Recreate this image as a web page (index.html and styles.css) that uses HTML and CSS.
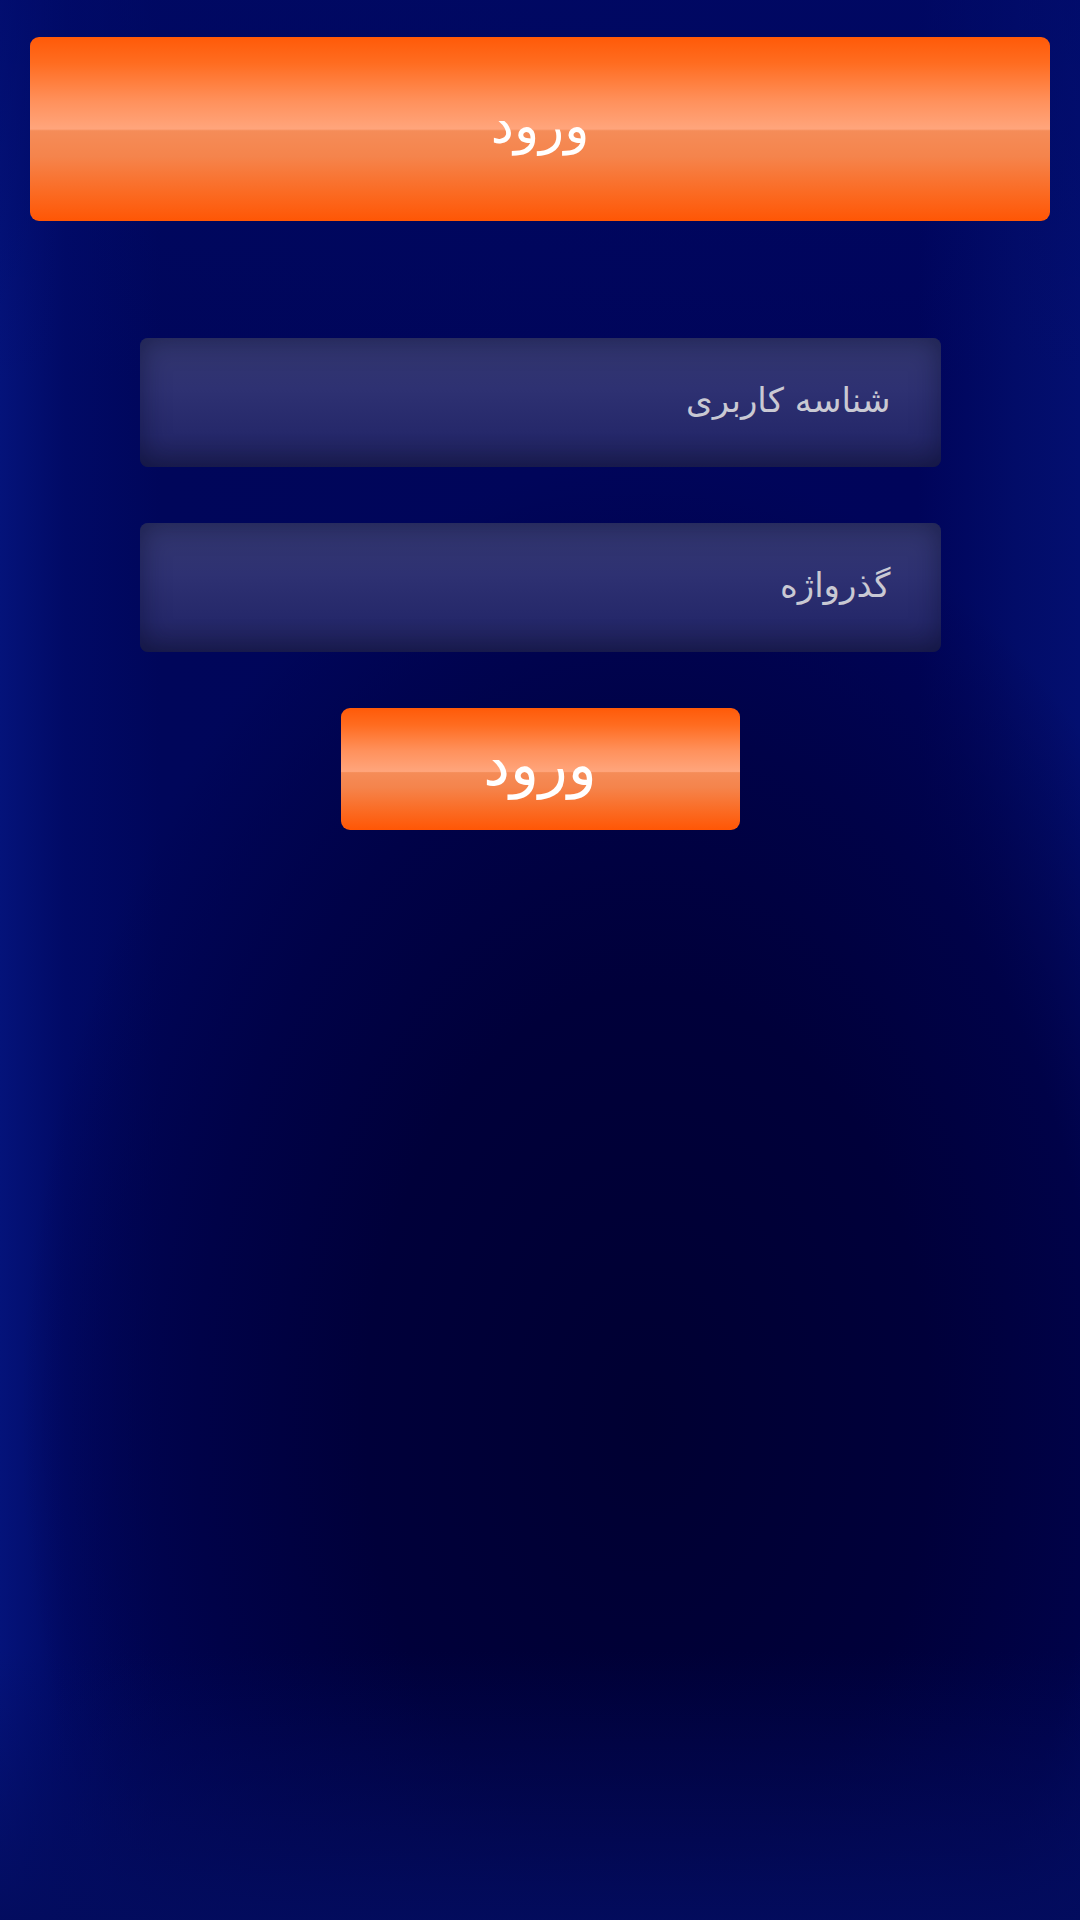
FILE: index.html
```html
<!DOCTYPE html>
<html lang="fa" dir="rtl">
<head>
<meta charset="utf-8">
<title>ورود</title>
<link rel="stylesheet" href="styles.css">
</head>
<body>
<div class="page">
  <header class="title-bar"><span class="title-text">ورود</span></header>
  <form class="login-form">
    <div class="field"><span class="placeholder">شناسه کاربری</span></div>
    <div class="field"><span class="placeholder">گذرواژه</span></div>
    <button type="button" class="submit"><span class="submit-text">ورود</span></button>
  </form>
</div>
</body>
</html>
```
FILE: styles.css
```css
html, body {
  margin: 0;
  padding: 0;
}
body {
  width: 1080px;
  min-height: 1920px;
  font-family: "DejaVu Sans", "Noto Sans", sans-serif;
  background:
    linear-gradient(180deg, rgba(0,10,104,0.6) 0%, rgba(0,6,90,0) 20%, rgba(0,6,90,0) 86%, rgba(3,12,94,0.95) 100%),
    radial-gradient(ellipse 58% 50% at 60% 74%, #000032 0%, #00003a 45%, #000248 72%, rgba(0,6,90,0) 100%),
    linear-gradient(90deg, #04137a 0%, #010a66 6%, #00065a 15%, #00055a 50%, #00045a 85%, #020c68 94%, #030f70 100%);
  background-color: #000658;
}
.page {
  box-sizing: border-box;
  min-height: 1920px;
  padding: 37px 30px 0 30px;
  display: flex;
  flex-direction: column;
  align-items: center;
}
.title-bar {
  box-sizing: border-box;
  width: 1020px;
  height: 184px;
  border-radius: 9px;
  display: flex;
  align-items: center;
  justify-content: center;
  background: linear-gradient(180deg, #ff5a08 0%, #ff6c20 14%, #ff915c 35%, #ffa57c 50%, #f58c58 51%, #f5844c 65%, #fb6a22 85%, #ff5605 100%);
}
.title-text {
  color: #ffffff;
  font-size: 52px;
  line-height: 1;
  margin-top: -8px;
}
.login-form {
  margin-top: 117px;
  display: flex;
  flex-direction: column;
  align-items: center;
  gap: 56px;
  width: 100%;
}
.field {
  box-sizing: border-box;
  width: 801px;
  height: 129px;
  border-radius: 8px;
  display: flex;
  align-items: center;
  padding-right: 50px;
  background: linear-gradient(180deg, #33376f 0%, #2e3172 40%, #25286a 75%, #1d1f55 100%);
  box-shadow: inset 0 0 28px rgba(10, 12, 50, 0.55);
}
.placeholder {
  color: #c9c9d3;
  font-size: 34px;
  line-height: 1;
  margin-top: -5px;
}
.submit {
  box-sizing: border-box;
  width: 399px;
  height: 122px;
  border: 0;
  padding: 0;
  border-radius: 9px;
  display: flex;
  align-items: center;
  justify-content: center;
  background: linear-gradient(180deg, #ff5a08 0%, #ff6c20 14%, #ff915c 35%, #ffa57c 52%, #f58c58 53%, #f5844c 65%, #fb6a22 85%, #ff5605 100%);
  font-family: "DejaVu Sans", "Noto Sans", sans-serif;
}
.submit-text {
  color: #ffffff;
  font-size: 60px;
  line-height: 1;
  margin-top: -10px;
}
```
